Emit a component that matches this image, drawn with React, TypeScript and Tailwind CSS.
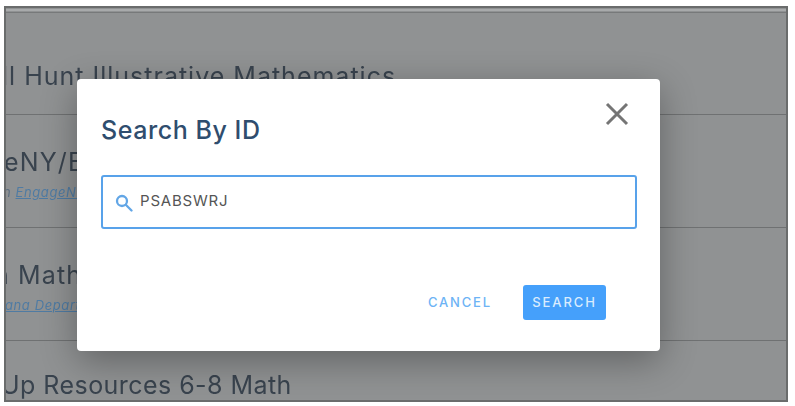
import React from "react";

const font = { fontFamily: '"Inter","Open Sans",sans-serif' };
const title = "block text-[25px] leading-[30px] tracking-[1.15px] text-[#39434e]";

export default function App() {
  return (
    <div className="w-[795px] h-[406px] bg-white overflow-hidden relative" style={font}>
      <div className="absolute left-[4px] top-[6px] w-[784px] h-[396px] border-2 border-[#6a6c6c] bg-[#909293] overflow-hidden blur-[0.4px]">
        <div className="h-[4px] mt-[1px] border-t-2 border-[#a8aaab] border-b border-b-[#77797a]" />
        <div className="h-[102px] border-b border-[#6f7172] overflow-hidden whitespace-nowrap">
          <span className="block text-[25px] leading-[30px] tracking-[1px] text-[#39434e] mt-[48px] -ml-[4px]">ll Hunt Illustrative Mathematics</span>
        </div>
        <div className="h-[113px] border-b border-[#6f7172] overflow-hidden whitespace-nowrap">
          <span className={`${title} mt-[32px] -ml-[2px]`}>eNY/Eureka</span>
          <span className="block text-[13px] leading-[16px] italic text-[#5d6f80] tracking-[0.6px] mt-[7px] -ml-[3px]">n <span className="underline text-[#4f7ba3]">EngageNY</span></span>
        </div>
        <div className="h-[113px] border-b border-[#6f7172] overflow-hidden whitespace-nowrap">
          <span className={`${title} mt-[32px] -ml-[12px]`}>n Math</span>
          <span className="block text-[13px] leading-[16px] italic underline text-[#4f7ba3] tracking-[0.6px] mt-[7px] -ml-[1px]">ana Department</span>
        </div>
        <div className="overflow-hidden whitespace-nowrap">
          <span className="block text-[25px] leading-[30px] tracking-[0.45px] text-[#39434e] mt-[29px] -ml-[5px]">Up Resources 6-8 Math</span>
        </div>
      </div>

      <div className="absolute left-[77px] top-[79px] w-[583px] h-[272px] bg-white rounded-[4px] shadow-[0_10px_36px_rgba(0,0,0,0.32)] flex flex-col pl-[24px] pr-[23px]">
        <div className="flex items-start justify-between h-[96px] shrink-0">
          <h2 className="text-[25px] leading-[30px] font-medium tracking-[0.55px] text-[#2f4d6e] mt-[36px]">Search By ID</h2>
          <svg width="24" height="24" viewBox="0 0 24 24" className="mt-[23px] mr-[8px] text-[#757575]" fill="none" stroke="currentColor" strokeWidth="3">
            <path d="M2 2 L22 22 M22 2 L2 22" />
          </svg>
        </div>
        <div className="h-[54px] border-2 border-[#58a2ea] rounded-[3px] flex items-center pl-[12px] gap-[7px] shrink-0">
          <svg width="18" height="18" viewBox="0 0 18 18" fill="none" stroke="#62a6e6" strokeWidth="2.3" className="mt-[1px]">
            <circle cx="7" cy="7" r="5" />
            <path d="M10.8 10.8 L16.5 16.5" strokeLinecap="round" />
          </svg>
          <span className="text-[15px] leading-[20px] -mt-[3px] text-[#555] tracking-[0.8px]">PSABSWRJ</span>
        </div>
        <div className="flex items-center justify-end mt-[56px] mr-[31px] gap-[31px]">
          <button className="text-[13px] font-medium tracking-[1.85px] text-[#6db3f5]">CANCEL</button>
          <button className="w-[83px] h-[35px] rounded-[3px] bg-[#45a0fb] text-[13px] font-medium tracking-[1.9px] text-[#d9ecfe]">SEARCH</button>
        </div>
      </div>
    </div>
  );
}
